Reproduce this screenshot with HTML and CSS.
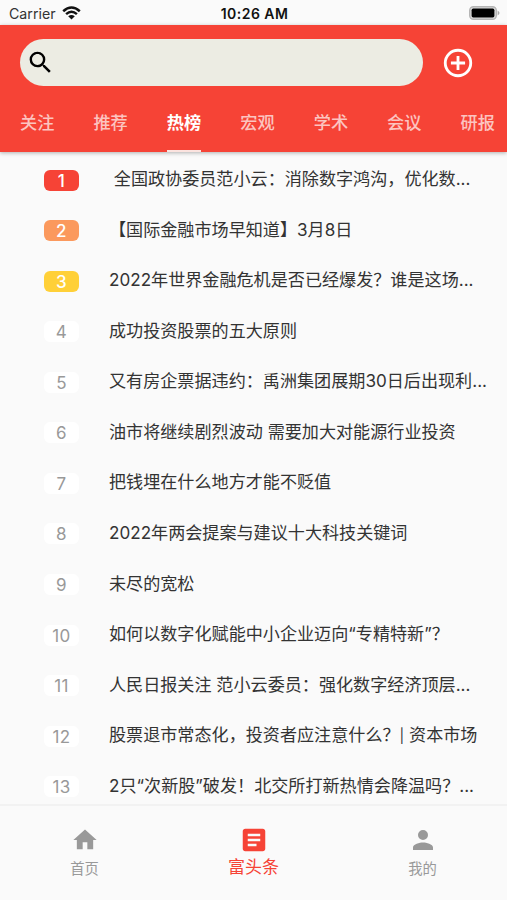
FILE: index.html
```html
<!DOCTYPE html>
<html lang="zh-CN">
<head>
<meta charset="utf-8">
<title>富头条</title>
<link rel="stylesheet" href="styles.css">
</head>
<body>
<div class="status">
  <div class="carrier"><span>Carrier</span>
    <svg class="wifi" width="19" height="14" viewBox="0 0 19 14"><path d="M1.2 5.2Q9.5-2.2 17.8 5.2M4.1 8.1Q9.5 3.4 14.9 8.1" fill="none" stroke="#111" stroke-width="2.5"/><path d="M6.2 10.2Q9.5 7.6 12.8 10.2L9.5 13.6Z" fill="#111"/></svg>
  </div>
  <div class="time">10:26 AM</div>
  <svg class="battery" width="31" height="14" viewBox="0 0 31 14"><rect x=".7" y=".7" width="26.6" height="12.6" rx="3.8" fill="#ddd" stroke="#b5b5b5" stroke-width="1.4"/><rect x="2.6" y="2.6" width="22.8" height="8.8" rx="1.6" fill="#000"/><path d="M28.6 4.6Q32.4 7 28.6 9.4Z" fill="#aaa"/></svg>
</div>
<header class="header">
  <div class="search-row">
    <div class="search"><svg width="29" height="29" viewBox="0 0 24 24"><path d="M15.5 14h-.79l-.28-.27A6.47 6.47 0 0 0 16 9.5 6.5 6.5 0 1 0 9.500 16c1.610 0 3.090-.59 4.230-1.570l.27.28v.79l5 4.990L20.490 19l-4.990-5zm-6 0C7.010 14 5 11.990 5 9.500S7.010 5 9.500 5 14 7.010 14 9.500 11.990 14 9.500 14z" fill="#000"/></svg></div>
    <svg class="add" width="34" height="34" viewBox="0 0 24 24"><path d="M13 7h-2v4H7v2h4v4h2v-4h4v-2h-4V7zm-1-5a10 10 0 1 0 0 20 10 10 0 0 0 0-20zm0 18a8 8 0 1 1 0-16 8 8 0 0 1 0 16z" fill="#fff"/></svg>
  </div>
  <nav class="tabs">
    <span class="tab">关注</span><span class="tab">推荐</span><span class="tab active">热榜</span><span class="tab">宏观</span><span class="tab">学术</span><span class="tab">会议</span><span class="tab">研报</span>
  </nav>
</header>
<main class="list">
  <div class="row"><span class="rank first">1</span><span class="title"> 全国政协委员范小云：消除数字鸿沟，优化数...</span></div>
  <div class="row"><span class="rank second">2</span><span class="title">【国际金融市场早知道】3月8日</span></div>
  <div class="row"><span class="rank third">3</span><span class="title">2022年世界金融危机是否已经爆发？谁是这场...</span></div>
  <div class="row"><span class="rank">4</span><span class="title">成功投资股票的五大原则</span></div>
  <div class="row"><span class="rank">5</span><span class="title">又有房企票据违约：禹洲集团展期30日后出现利...</span></div>
  <div class="row"><span class="rank">6</span><span class="title">油市将继续剧烈波动 需要加大对能源行业投资</span></div>
  <div class="row"><span class="rank">7</span><span class="title">把钱埋在什么地方才能不贬值</span></div>
  <div class="row"><span class="rank">8</span><span class="title">2022年两会提案与建议十大科技关键词</span></div>
  <div class="row"><span class="rank">9</span><span class="title">未尽的宽松</span></div>
  <div class="row"><span class="rank">10</span><span class="title">如何以数字化赋能中小企业迈向“专精特新”？</span></div>
  <div class="row"><span class="rank">11</span><span class="title">人民日报关注 范小云委员：强化数字经济顶层...</span></div>
  <div class="row"><span class="rank">12</span><span class="title">股票退市常态化，投资者应注意什么？<span class="bar">|</span> 资本市场</span></div>
  <div class="row"><span class="rank">13</span><span class="title">2只“次新股”破发！北交所打新热情会降温吗？...</span></div>
</main>
<footer class="bottom">
  <div class="item"><svg width="28" height="28" viewBox="0 0 24 24"><path d="M10 20v-6h4v6h5v-8h3L12 3 2 12h3v8z" fill="currentColor"/></svg><span>首页</span></div>
  <div class="item on"><svg width="30" height="30" viewBox="0 0 24 24"><path d="M19 3H5c-1.100 0-2 .9-2 2v14c0 1.100.9 2 2 2h14c1.100 0 2-.9 2-2V5c0-1.100-.9-2-2-2zm-5 14H7v-2h7v2zm3-4H7v-2h10v2zm0-4H7V7h10v2z" fill="currentColor"/></svg><span>富头条</span></div>
  <div class="item"><svg width="30" height="30" viewBox="0 0 24 24"><path d="M12 12a4 4 0 1 0 0-8 4 4 0 0 0 0 8zm0 2c-2.670 0-8 1.340-8 4v2h16v-2c0-2.660-5.330-4-8-4z" fill="currentColor"/></svg><span>我的</span></div>
</footer>
</body>
</html>
```
FILE: styles.css
```css
* { box-sizing: border-box; }
body {
  margin: 0;
  height: 900px;
  overflow: hidden;
  display: flex;
  flex-direction: column;
  background: #fafafa;
  font-family: Inter, "Noto Sans CJK SC", sans-serif;
}
svg { display: block; flex: none; }
.status {
  flex: none;
  height: 25px;
  padding: 2px 7px 0 9px;
  display: grid;
  grid-template-columns: 1fr auto 1fr;
  align-items: center;
  color: #333;
  font-size: 14.200px;
  line-height: 20px;
}
.carrier { display: flex; align-items: center; gap: 6px; }
.wifi { margin-top: -2px; }
.time { font-weight: 600; font-size: 14px; letter-spacing: .45px; color: #111; }
.battery { justify-self: end; margin-top: -1px; }
.header {
  flex: none;
  height: 127px;
  padding-top: 14px;
  background: #f64336;
  box-shadow: 0 1px 4px rgba(0, 0, 0, .3);
  z-index: 1;
}
.search-row { display: flex; align-items: center; padding-left: 20px; }
.search {
  width: 403px;
  height: 47px;
  border-radius: 24px;
  background: #ecece3;
  display: flex;
  align-items: center;
  padding-left: 6px;
}
.add { margin-left: 18px; }
.tabs {
  height: 66px;
  padding: 0 12px 0 20px;
  display: flex;
  justify-content: space-between;
  font-size: 17.200px;
  font-weight: 500;
  color: rgba(255, 255, 255, .7);
}
.tab {
  flex: none;
  line-height: 24px;
  padding-top: 25px;
  border-bottom: 2px solid transparent;
}
.tab.active { color: #fff; font-weight: 700; border-color: #fbe3df; }
.list {
  flex: 1;
  min-height: 0;
  overflow: hidden;
  padding-top: 2px;
}
.row {
  height: 50.540px;
  display: flex;
  align-items: center;
  padding-left: 44px;
}
.rank {
  width: 35px;
  height: 21px;
  border-radius: 6px;
  margin: 2px 30px 0 0;
  background: #fff;
  color: #999;
  font-size: 17px;
  letter-spacing: .4px;
  line-height: 22px;
  text-align: center;
  flex: none;
}
.first, .second, .third { color: #fff; font-weight: 500; }
.first { background: #f64336; }
.second { background: #fb995d; }
.third { background: #ffd038; }
.title {
  white-space: pre;
  font-size: 17.100px;
  line-height: 26px;
  color: #333;
}
.bar { font-size: 14px; }
.bottom {
  flex: none;
  height: 96px;
  border-top: 2px solid #f2f2f2;
  display: grid;
  grid-template-columns: repeat(3, 1fr);
  padding-top: 19px;
}
.item {
  display: flex;
  flex-direction: column;
  align-items: center;
  color: #999;
  font-size: 14.300px;
  line-height: 20px;
}
.item svg { height: 30px; margin-bottom: 4px; }
.item.on { color: #f64336; font-size: 17px; }
.item.on svg { margin-bottom: 2px; }
```
